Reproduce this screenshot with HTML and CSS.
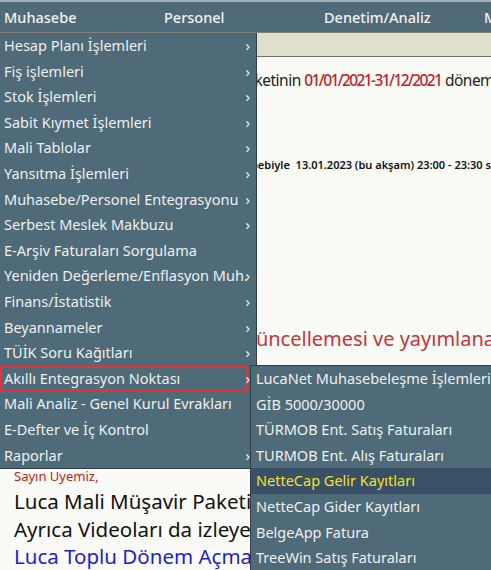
FILE: index.html
```html
<!DOCTYPE html>
<html lang="tr">
<head>
    <meta charset="UTF-8">
    <title>Luca</title>
    <link rel="stylesheet" href="styles.css">
</head>
<body>
    <div class="menubar">
        <div class="top-item">Muhasebe</div>
        <div class="top-item">Personel</div>
        <div class="top-item">Denetim/Analiz</div>
        <div class="top-item">Mali Müşavir</div>
    </div>

    <div class="page">
        <div class="page-strip"></div>
        <div class="page-body">
            <p class="line-period">Sayın Üyemiz, Luca Mali Müşavir Paketinin <span class="red">01/01/2021-31/12/2021</span> dönemi için</p>
            <p class="line-note">Sistem bakım çalışmaları sebebiyle&nbsp; 13.01.2023 (bu akşam) 23:00 - 23:30 saatleri arasında</p>
            <p class="line-big-red">Mevzuat güncellemesi ve yayımlanan</p>
            <p class="line-greet">Sayın Uyemiz,</p>
            <p class="line-large first">Luca Mali Müşavir Paketinin yeni sürümü</p>
            <p class="line-large">Ayrıca Videoları da izleyebilirsiniz.</p>
            <p class="line-large blue">Luca Toplu Dönem Açma İşlemleri</p>
        </div>
    </div>

    <ul class="dropdown">
        <li class="menu-item has-sub">Hesap Planı İşlemleri</li>
        <li class="menu-item has-sub">Fiş işlemleri</li>
        <li class="menu-item has-sub">Stok İşlemleri</li>
        <li class="menu-item has-sub">Sabit Kıymet İşlemleri</li>
        <li class="menu-item has-sub">Mali Tablolar</li>
        <li class="menu-item has-sub">Yansıtma İşlemleri</li>
        <li class="menu-item has-sub">Muhasebe/Personel Entegrasyonu</li>
        <li class="menu-item has-sub">Serbest Meslek Makbuzu</li>
        <li class="menu-item">E-Arşiv Faturaları Sorgulama</li>
        <li class="menu-item has-sub">Yeniden Değerleme/Enflasyon Muh.</li>
        <li class="menu-item has-sub">Finans/İstatistik</li>
        <li class="menu-item has-sub">Beyannameler</li>
        <li class="menu-item has-sub">TÜİK Soru Kağıtları</li>
        <li class="menu-item has-sub marked">Akıllı Entegrasyon Noktası</li>
        <li class="menu-item">Mali Analiz - Genel Kurul Evrakları</li>
        <li class="menu-item">E-Defter ve İç Kontrol</li>
        <li class="menu-item has-sub">Raporlar</li>
    </ul>

    <ul class="submenu">
        <li class="menu-item">LucaNet Muhasebeleşme İşlemleri</li>
        <li class="menu-item">GİB 5000/30000</li>
        <li class="menu-item">TÜRMOB Ent. Satış Faturaları</li>
        <li class="menu-item">TURMOB Ent. Alış Faturaları</li>
        <li class="menu-item active">NetteCap Gelir Kayıtları</li>
        <li class="menu-item">NetteCap Gider Kayıtları</li>
        <li class="menu-item">BelgeApp Fatura</li>
        <li class="menu-item">TreeWin Satış Faturaları</li>
    </ul>
</body>
</html>
```

FILE: styles.css
```css
body {
    margin: 0;
    font-family: "Noto Sans", "Open Sans", sans-serif;
    background: #fafaf6;
    overflow: hidden;
    height: 570px;
    position: relative;
}

.menubar {
    display: flex;
    height: 30px;
    background: #4f6a78;
    border-top: 2px solid #a3b1b9;
    border-bottom: 1px solid #8c7f73;
}

.top-item {
    flex: 0 0 160px;
    padding-left: 4px;
    box-sizing: border-box;
    color: #f2f2f2;
    font-size: 14.5px;
    font-weight: 500;
    line-height: 30px;
    white-space: nowrap;
}

.page-strip {
    height: 23px;
    background: #dfe0cb;
    border-bottom: 1px solid #6f726a;
}

.page-body {
    white-space: nowrap;
    overflow: hidden;
}

.page-body p {
    margin: 0;
}

.red {
    color: #bf2128;
    font-weight: 500;
    letter-spacing: -1.6px;
}

.line-period {
    margin-left: 14px !important;
    padding-top: 13px;
    font-size: 15.5px;
    letter-spacing: -0.5px;
    line-height: 20px;
    color: #222;
}

.line-note {
    margin-left: 103px !important;
    padding-top: 67px;
    font-size: 11px;
    font-weight: 600;
    color: #111;
}

.line-big-red {
    margin-left: 159px !important;
    padding-top: 153px;
    font-size: 20px;
    color: #c4343a;
}

.line-greet {
    margin-left: 14px !important;
    padding-top: 115px;
    font-size: 13px;
    color: #c31b1b;
}

.line-large {
    margin-left: 14px !important;
    font-size: 20.5px;
    line-height: 27.5px;
    color: #111;
}

.line-large.first {
    padding-top: 3px;
}

.blue {
    color: #1f1fc8;
}

.dropdown, .submenu {
    list-style: none;
    margin: 0;
    padding: 0;
    position: absolute;
    background: #4f6a78;
}

.dropdown {
    top: 33px;
    left: 0;
    width: 256px;
    border-right: 1px solid #2f3f48;
    border-bottom: 1px solid #2f3f48;
}

.submenu {
    top: 365px;
    left: 250px;
    width: 260px;
    border-top: 1px solid #2f3f48;
    border-left: 1px solid #2f3f48;
}

.menu-item {
    height: 25.6px;
    line-height: 25.6px;
    padding-left: 4px;
    color: #eef0f0;
    font-size: 14.5px;
    white-space: nowrap;
    position: relative;
}

.submenu .menu-item {
    padding-left: 5px;
}

.has-sub::after {
    content: "›";
    position: absolute;
    right: 6px;
    top: 0;
}

.marked::before {
    content: "";
    position: absolute;
    left: 0;
    top: 0;
    width: 248px;
    height: 25.6px;
    box-sizing: border-box;
    border: 2px solid #e5323b;
}

.active {
    background: #3a5066;
    color: #f2e12e;
}
```
